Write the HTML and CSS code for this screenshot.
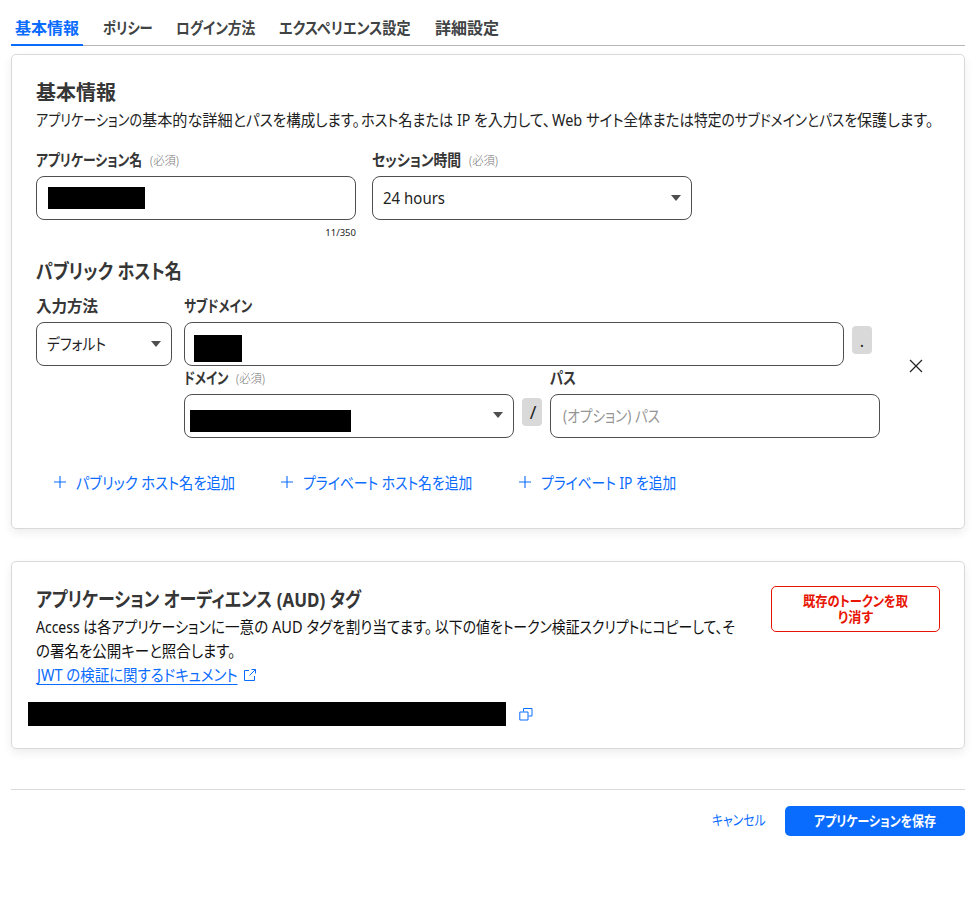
FILE: index.html
```html
<!DOCTYPE html>
<html lang="ja">
<head>
<meta charset="utf-8">
<title>基本情報</title>
<link rel="stylesheet" href="styles.css">
</head>
<body>
<nav class="tabs">
  <a class="tab active"><span>基本情報</span></a>
  <a class="tab"><span class="fit tab-policy">ポリシー</span></a>
  <a class="tab"><span class="fit tab-login">ログイン方法</span></a>
  <a class="tab"><span class="fit tab-exp">エクスペリエンス設定</span></a>
  <a class="tab"><span>詳細設定</span></a>
</nav>

<section class="card basic">
  <h2>基本情報</h2>
  <p class="desc"><span class="fit desc-1">アプリケーションの</span><span class="fit desc-2">基本的な詳細と</span><span class="fit desc-3">パスを構成します。</span><span class="fit desc-4">ホスト名または IP </span><span class="fit desc-5">を入力して、</span><span class="fit desc-6">Web サイト全体または</span><span class="fit desc-7">特定のサブドメインとパスを</span><span class="fit desc-8">保護します。</span></p>
  <div class="fields">
    <div class="field">
      <div class="label"><span class="fit label-app">アプリケーション名</span><small class="fit">(必須)</small></div>
      <div class="input"><i class="mask mask-name"></i></div>
      <div class="count">11/350</div>
    </div>
    <div class="field">
      <div class="label"><span class="fit label-session">セッション時間</span><small class="fit">(必須)</small></div>
      <div class="input"><span class="fit hours">24 hours</span><b class="caret"></b></div>
    </div>
  </div>
  <h2><span class="fit title-host">パブリック ホスト名</span></h2>
  <div class="host">
    <div class="method">
      <div class="label"><span class="fit label-method">入力方法</span></div>
      <div class="input"><span class="fit default">デフォルト</span><b class="caret"></b></div>
    </div>
    <div class="host-main">
      <div class="line">
        <div class="sub">
          <div class="label"><span class="fit label-sub">サブドメイン</span></div>
          <div class="input"><i class="mask mask-sub"></i></div>
        </div>
        <div class="chip">.</div>
      </div>
      <div class="line">
        <div class="half">
          <div class="label"><span class="fit label-domain">ドメイン</span><small class="fit">(必須)</small></div>
          <div class="input"><i class="mask mask-domain"></i><b class="caret caret-up"></b></div>
        </div>
        <div class="chip slash">/</div>
        <div class="half">
          <div class="label"><span class="fit label-path">パス</span></div>
          <div class="input"><span class="fit placeholder">(オプション) パス</span></div>
        </div>
      </div>
    </div>
    <svg class="close" viewBox="0 0 14 14"><path d="M1 1l12 12M13 1L1 13"/></svg>
  </div>
  <div class="adds">
    <a class="add"><svg viewBox="0 0 12 12"><path d="M6 0v12M0 6h12"/></svg><span class="fit add-public">パブリック ホスト名を追加</span></a>
    <a class="add"><svg viewBox="0 0 12 12"><path d="M6 0v12M0 6h12"/></svg><span class="fit add-private">プライベート ホスト名を追加</span></a>
    <a class="add"><svg viewBox="0 0 12 12"><path d="M6 0v12M0 6h12"/></svg><span class="fit add-ip">プライベート IP を追加</span></a>
  </div>
</section>

<section class="card aud">
  <div class="aud-text">
    <h2><span class="fit title-aud">アプリケーション オーディエンス (AUD) タグ</span></h2>
    <p><span class="fit aud-1">Access は各アプリケーション</span><span class="fit aud-2">に一意の AUD タグを割り当てます。</span><span class="fit aud-3">以下の値をトークン検証スクリプトにコピーして、そ</span><br><span class="fit aud-4">の署名を公開キーと照合します。</span></p>
    <a class="doc"><span class="fit doc-text">JWT の検証に関するドキュメント</span><svg viewBox="0 0 12 12"><path d="M5 1.500H.5v10h10V7M7.500 .5h4v4M11.500.5L5.500 6.500"/></svg></a>
    <div class="tagline"><i class="mask mask-tag"></i><svg viewBox="0 0 14 14"><path d="M4.500 4.500v-3h8.500v7.500h-3.500M.8 5h8.200v8H.8z"/></svg></div>
  </div>
  <button class="revoke"><span class="fit revoke-1">既存のトークンを取</span><br><span class="fit revoke-2">り消す</span></button>
</section>

<footer class="actions">
  <a class="cancel"><span class="fit cancel-text">キャンセル</span></a>
  <button class="save"><span class="fit save-text">アプリケーションを保存</span></button>
</footer>
</body>
</html>
```
FILE: styles.css
```css
* { box-sizing: border-box; }
body {
  margin: 0;
  padding: 10px 14px 0 11px;
  background: #fff;
  color: #222;
  font: 16px/24px "Noto Sans", "Noto Sans CJK JP", sans-serif;
  font-feature-settings: "palt";
}
h2, p { margin: 0; }
svg { fill: none; stroke: #0a6cff; flex: none; }

/* Condensed kana: each phrase is narrowed to its set width */
.fit { display: inline-block; white-space: pre; text-align: left; transform-origin: 0 50%; flex: none; }
.tab-policy { width: 49px; transform: scaleX(.83); }
.tab-login { width: 79px; transform: scaleX(.858); }
.tab-exp { width: 132px; transform: scaleX(.88); }
.desc-1 { width: 106px; transform: scaleX(.819); }
.desc-2 { width: 104px; transform: scaleX(.947); }
.desc-3 { width: 115px; transform: scaleX(.908); }
.desc-4 { width: 113px; transform: scaleX(.885); }
.desc-5 { width: 78px; transform: scaleX(.935); }
.desc-6 { width: 142px; transform: scaleX(.904); }
.desc-7 { width: 163px; transform: scaleX(.859); }
.desc-8 { width: 79px; transform: scaleX(.94); }
.label-app { width: 106px; transform: scaleX(.803); }
.label-session { width: 89px; transform: scaleX(.864); }
.label-method { width: 62px; transform: scaleX(.97); }
.label-sub { width: 68px; transform: scaleX(.78); }
.label-domain { width: 44px; transform: scaleX(.775); }
.label-path { width: 26px; transform: scaleX(.841); }
.hours { width: 62px; transform: scaleX(.937); }
.default { width: 59px; transform: scaleX(.866); }
.title-host { width: 146px; transform: scaleX(.853); }
.title-aud { width: 325px; transform: scaleX(.849); }
.add-public { width: 159px; transform: scaleX(.892); }
.add-private { width: 170px; transform: scaleX(.863); }
.add-ip { width: 136px; transform: scaleX(.86); }
.aud-1 { width: 175px; transform: scaleX(.874); }
.aud-2 { width: 224px; transform: scaleX(.91); }
.aud-3 { width: 300px; transform: scaleX(.866); }
.aud-4 { width: 199px; transform: scaleX(.905); }
.doc-text { width: 200px; transform: scaleX(.905); }
.revoke-1 { width: 105px; transform: scaleX(.876); }
.revoke-2 { width: 35px; transform: scaleX(.931); }
.cancel-text { width: 53px; transform: scaleX(.845); }
.save-text { width: 122px; transform: scaleX(.852); }

.tabs { display: flex; gap: 16px; height: 36px; border-bottom: 1px solid #b6b6b6; }
.tab { height: 36px; padding: 6px 4px 0; font-weight: 700; color: #404344; }
.tab.active { color: #0a6cff; border-bottom: 2px solid #0a6cff; }

.card { border: 1px solid #d9d9d9; border-radius: 5px; padding: 24px; box-shadow: 0 4px 10px rgba(0, 0, 0, .07); }
.card h2 { font-size: 20px; line-height: 28px; font-weight: 700; color: #363636; }
.basic { margin-top: 8px; height: 475px; }
.desc { padding-top: 1px; height: 41px; white-space: nowrap; }

.fields { display: flex; gap: 16px; height: 110px; }
.field { width: 320px; }
.label { height: 28px; display: flex; align-items: flex-start; gap: 8px; font-weight: 700; color: #363636; }
.label small { width: 30px; transform: scaleX(.945); font-size: 12px; font-weight: 300; color: #777; line-height: 26px; }
.input { height: 44px; border: 1px solid #4f4f4f; border-radius: 8px; padding: 0 10px; display: flex; align-items: center; justify-content: space-between; }
.caret { width: 10px; height: 6px; background: #4f4f4f; clip-path: polygon(0 0, 100% 0, 50% 100%); }
.caret-up { margin-bottom: 2px; }
.count { font-size: 9.500px; line-height: 26px; text-align: right; }
.mask { display: block; background: #000; }
.mask-name { width: 97px; height: 22px; margin-left: 1px; }
.mask-sub { width: 48px; height: 27px; margin: 9px 0 0 -1px; }
.mask-domain { width: 161px; height: 22px; margin: 10px 0 0 -5px; }
.mask-tag { width: 478px; height: 24px; }

.host { display: flex; margin-top: 8px; height: 144px; }
.method { width: 136px; margin-right: 12px; }
.host-main { width: 696px; }
.line { display: flex; gap: 8px; }
.sub { width: 660px; }
.half { width: 330px; }
.chip { width: 20px; height: 28px; margin-top: 32px; background: #d9d9d9; border-radius: 4px; text-align: center; line-height: 30px; }
.slash { padding-left: 2px; font-size: 18px; line-height: 28px; }
.placeholder { color: #959595; margin-left: 2px; width: 98px; transform: scaleX(.855); }
.close { width: 14px; height: 14px; margin: 65px 0 0 29px; stroke: #222; stroke-width: 1.200; }

.adds { display: flex; gap: 46px; margin: 32px 0 0 18px; color: #0a6cff; line-height: 26px; }
.add { display: flex; align-items: flex-start; gap: 10px; }
.add svg { width: 12px; height: 12px; margin-top: 6px; stroke-width: 1.100; }

.aud { margin-top: 32px; height: 188px; display: flex; justify-content: space-between; }
.aud-text { width: 704px; color: #111; }
.aud-text p { padding-top: 1px; white-space: nowrap; }
.doc { display: flex; align-items: center; gap: 7px; padding-left: 1px; color: #0a6cff; }
.doc-text { text-decoration: underline; text-underline-offset: 3px; }
.doc svg { width: 12px; height: 12px; }
.tagline { display: flex; align-items: center; gap: 13px; margin: 15px 0 0 -8px; }
.tagline svg { width: 14px; height: 14px; }
button { font: inherit; font-feature-settings: inherit; font-weight: 700; padding: 0; }
.revoke { width: 169px; height: 46px; border: 1px solid #e81403; border-radius: 5px; background: #fff; color: #e81403; font-size: 14px; line-height: 16px; }

.actions { display: flex; justify-content: flex-end; gap: 20px; margin-top: 40px; padding-top: 16px; border-top: 1px solid #d9d9d9; }
.cancel { color: #0a6cff; font-size: 14px; line-height: 28px; }
.save { width: 180px; height: 30px; border: 0; border-radius: 5px; background: #0a6cff; color: #fff; font-size: 14px; }
```
